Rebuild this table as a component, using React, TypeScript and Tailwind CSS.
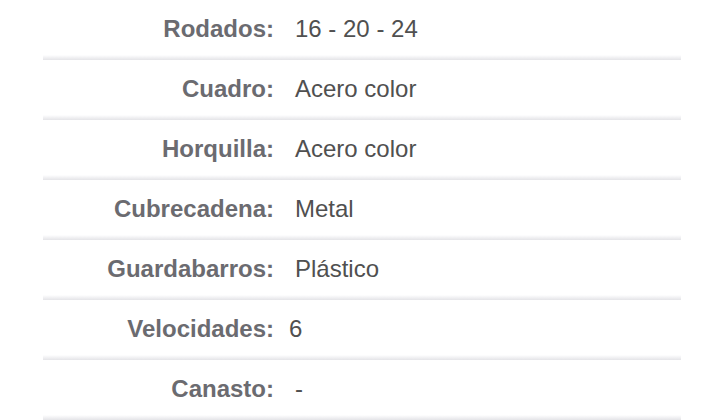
const specs: { label: string; value: string; shift?: boolean }[] = [
  { label: "Rodados:", value: "16 - 20 - 24" },
  { label: "Cuadro:", value: "Acero color" },
  { label: "Horquilla:", value: "Acero color" },
  { label: "Cubrecadena:", value: "Metal" },
  { label: "Guardabarros:", value: "Plástico" },
  { label: "Velocidades:", value: "6", shift: true },
  { label: "Canasto:", value: "-" },
];

export default function App() {
  return (
    <div className="h-[420px] w-[720px] overflow-hidden bg-white font-['Liberation_Sans',Arial,sans-serif]">
      <div className="ml-[43px] w-[638px]">
        {specs.map((s) => (
          <div key={s.label}>
            <div className="flex h-[55px] items-center pt-[2px]">
              <div className="w-[231px] text-right text-[24px] font-bold text-[#6b6b70]">
                {s.label}
              </div>
              <div
                className={
                  s.shift
                    ? "pl-[15px] text-[24px] text-[#505050]"
                    : "pl-[21px] text-[24px] text-[#505050]"
                }
              >
                {s.value}
              </div>
            </div>
            <div className="h-[5px] bg-gradient-to-b from-white to-[#e4e4e8]" />
          </div>
        ))}
      </div>
    </div>
  );
}
